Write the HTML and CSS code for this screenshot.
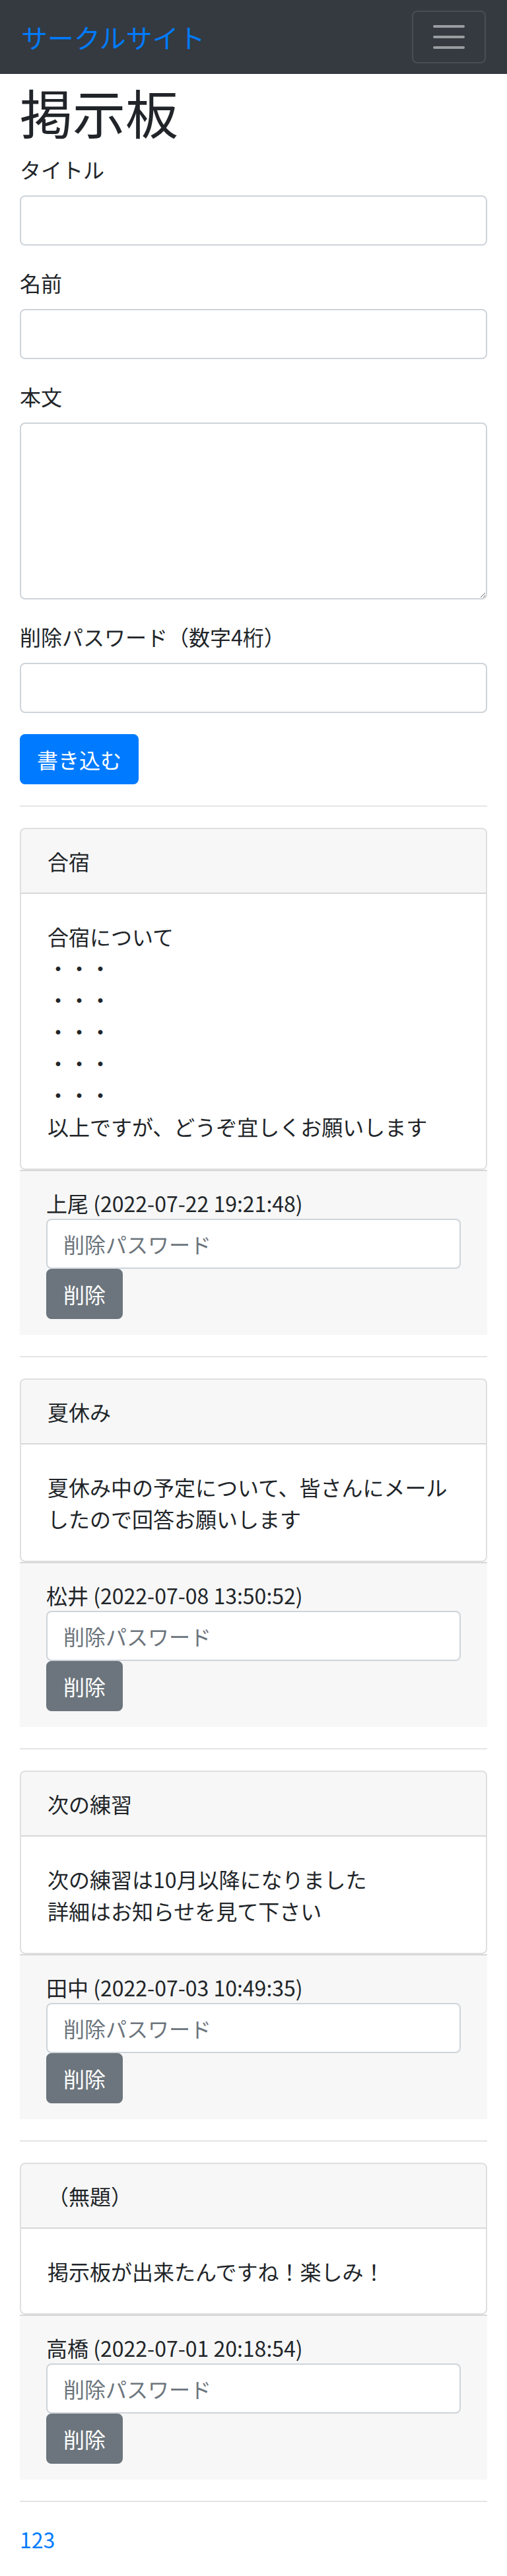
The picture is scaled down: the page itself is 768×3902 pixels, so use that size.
FILE: index.html
```html
<!DOCTYPE html>
<html lang="ja">
<head>
<meta charset="utf-8">
<title>掲示板</title>
<link rel="stylesheet" href="styles.css">
</head>
<body>
<nav class="navbar">
  <a class="navbar-brand" href="#">サークルサイト</a>
  <button class="navbar-toggler" type="button" aria-label="メニュー">
    <svg class="toggler-icon" viewBox="0 0 30 30" width="60" height="60" aria-hidden="true">
      <path d="M4 7h22M4 15h22M4 23h22" stroke="rgba(255,255,255,0.5)" stroke-width="2" stroke-linecap="round" stroke-miterlimit="10" fill="none"/>
    </svg>
  </button>
</nav>

<main class="container">
  <h1 class="page-title">掲示板</h1>

  <form class="post-form">
    <div class="form-group">
      <label class="form-label" for="title">タイトル</label>
      <input class="form-control" id="title" type="text">
    </div>
    <div class="form-group">
      <label class="form-label" for="name">名前</label>
      <input class="form-control" id="name" type="text">
    </div>
    <div class="form-group">
      <label class="form-label" for="body">本文</label>
      <textarea class="form-control textarea" id="body" rows="5"></textarea>
    </div>
    <div class="form-group">
      <label class="form-label" for="pass">削除パスワード（数字4桁）</label>
      <input class="form-control" id="pass" type="text">
    </div>
    <div class="btn-row">
      <button class="btn btn-primary" type="button">書き込む</button>
    </div>
  </form>

  <hr class="divider">

  <article class="post">
    <div class="card">
      <div class="card-header">合宿</div>
      <div class="card-body">
        <p class="card-text">合宿について<br>・・・<br>・・・<br>・・・<br>・・・<br>・・・<br>以上ですが、どうぞ宜しくお願いします</p>
      </div>
    </div>
    <div class="card-footer">
      <div class="meta">上尾 (2022-07-22 19:21:48)</div>
      <input class="form-control" type="password" placeholder="削除パスワード">
      <div class="btn-row">
        <button class="btn btn-secondary" type="button">削除</button>
      </div>
    </div>
  </article>

  <hr class="divider">

  <article class="post">
    <div class="card">
      <div class="card-header">夏休み</div>
      <div class="card-body">
        <p class="card-text">夏休み中の予定について、皆さんにメールしたので回答お願いします</p>
      </div>
    </div>
    <div class="card-footer">
      <div class="meta">松井 (2022-07-08 13:50:52)</div>
      <input class="form-control" type="password" placeholder="削除パスワード">
      <div class="btn-row">
        <button class="btn btn-secondary" type="button">削除</button>
      </div>
    </div>
  </article>

  <hr class="divider">

  <article class="post">
    <div class="card">
      <div class="card-header">次の練習</div>
      <div class="card-body">
        <p class="card-text">次の練習は10月以降になりました<br>詳細はお知らせを見て下さい</p>
      </div>
    </div>
    <div class="card-footer">
      <div class="meta">田中 (2022-07-03 10:49:35)</div>
      <input class="form-control" type="password" placeholder="削除パスワード">
      <div class="btn-row">
        <button class="btn btn-secondary" type="button">削除</button>
      </div>
    </div>
  </article>

  <hr class="divider">

  <article class="post">
    <div class="card">
      <div class="card-header">（無題）</div>
      <div class="card-body">
        <p class="card-text">掲示板が出来たんですね！楽しみ！</p>
      </div>
    </div>
    <div class="card-footer">
      <div class="meta">高橋 (2022-07-01 20:18:54)</div>
      <input class="form-control" type="password" placeholder="削除パスワード">
      <div class="btn-row">
        <button class="btn btn-secondary" type="button">削除</button>
      </div>
    </div>
  </article>

  <hr class="divider">

  <div class="pager"><a href="#">1</a><a href="#">2</a><a href="#">3</a></div>
</main>
</body>
</html>
```

FILE: styles.css
```css
* {
  box-sizing: border-box;
}

html, body {
  margin: 0;
  padding: 0;
}

body {
  font-family: "Noto Sans CJK JP", "Noto Sans", sans-serif;
  font-size: 32px;
  line-height: 48px;
  color: #212529;
  background: #fff;
}

a {
  color: #007bff;
  text-decoration: none;
}

/* navbar */
.navbar {
  display: flex;
  align-items: center;
  justify-content: space-between;
  padding: 16px 32px;
  background: #343a40;
}

.navbar-brand {
  display: inline-block;
  padding: 10px 0;
  font-size: 40px;
  line-height: 60px;
  color: #007bff;
  white-space: nowrap;
}

.navbar-toggler {
  display: flex;
  align-items: center;
  justify-content: center;
  padding: 8px 24px;
  background: transparent;
  border: 2px solid rgba(255, 255, 255, 0.1);
  border-radius: 8px;
  cursor: pointer;
}

.toggler-icon {
  display: block;
  width: 60px;
  height: 60px;
}

/* layout */
.container {
  padding: 0 30px;
}

.page-title {
  margin: 8px 0 16px;
  font-size: 80px;
  line-height: 96px;
  font-weight: 400;
}

/* form */
.post-form {
  margin: 0;
}

.form-group {
  margin-bottom: 32px;
}

.form-label {
  display: block;
  margin-bottom: 16px;
}

.form-control {
  display: block;
  width: 100%;
  height: 76px;
  padding: 12px 24px;
  font-family: inherit;
  font-size: 32px;
  line-height: 48px;
  color: #495057;
  background: #fff;
  border: 2px solid #ced4da;
  border-radius: 8px;
  outline: none;
  margin: 0;
}

.form-control::placeholder {
  color: #6c757d;
  opacity: 1;
}

.textarea {
  height: auto;
  resize: vertical;
}

.btn-row {
  display: flex;
}

.btn {
  display: inline-block;
  padding: 12px 24px;
  font-family: inherit;
  font-size: 32px;
  line-height: 48px;
  font-weight: 400;
  color: #fff;
  border: 2px solid transparent;
  border-radius: 8px;
  cursor: pointer;
  margin: 0;
}

.btn-primary {
  background: #007bff;
  border-color: #007bff;
}

.btn-secondary {
  background: #6c757d;
  border-color: #6c757d;
}

.divider {
  margin: 32px 0;
  height: 0;
  border: 0;
  border-top: 2px solid rgba(0, 0, 0, 0.1);
}

/* posts */
.card {
  background: #fff;
  border: 2px solid rgba(0, 0, 0, 0.125);
  border-radius: 8px;
}

.card-header {
  padding: 24px 40px;
  background: rgba(0, 0, 0, 0.03);
  border-bottom: 2px solid rgba(0, 0, 0, 0.125);
  border-radius: 6px 6px 0 0;
}

.card-body {
  padding: 40px;
}

.card-text {
  margin: 0;
}

.card-footer {
  padding: 24px 40px;
  background: #f7f7f7;
  border-top: 2px solid rgba(0, 0, 0, 0.125);
}

.meta {
  white-space: nowrap;
}

.pager {
  margin: 0;
}
```
